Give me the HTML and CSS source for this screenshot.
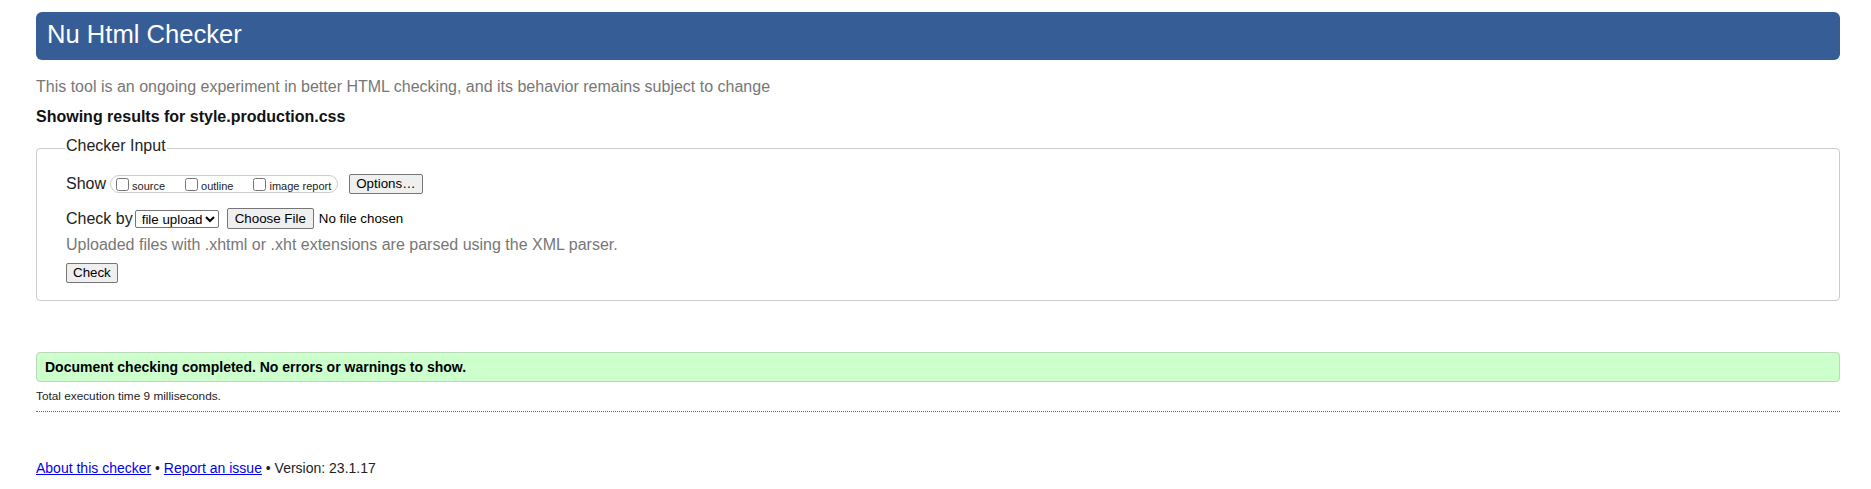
FILE: index.html
```html
<!DOCTYPE html>
<html lang="en">
<head>
<meta charset="utf-8">
<title>Nu Html Checker</title>
<link rel="stylesheet" href="styles.css">
</head>
<body>
<h1 class="title">Nu Html Checker</h1>
<p class="intro">This tool is an ongoing experiment in better HTML checking, and its behavior remains subject to change</p>
<p class="showing">Showing results for style.production.css</p>
<form class="checker-form">
  <fieldset class="checker-input">
    <legend class="checker-legend">Checker Input</legend>
    <div class="row row-show">
      <span class="row-label">Show</span>
      <span class="checkboxes">
        <label class="cb-label"><input type="checkbox" class="cb"><span class="cb-text">source</span></label>
        <label class="cb-label"><input type="checkbox" class="cb"><span class="cb-text">outline</span></label>
        <label class="cb-label cb-last"><input type="checkbox" class="cb"><span class="cb-text">image report</span></label>
      </span>
      <button type="button" class="btn btn-options">Options…</button>
    </div>
    <div class="row row-checkby">
      <span class="row-label">Check by</span>
      <select class="select-mode"><option>file upload</option></select>
      <input type="file" class="file-input">
    </div>
    <p class="hint">Uploaded files with .xhtml or .xht extensions are parsed using the XML parser.</p>
    <div class="row row-submit">
      <button type="button" class="btn btn-check">Check</button>
    </div>
  </fieldset>
</form>
<p class="success">Document checking completed. No errors or warnings to show.</p>
<p class="stats">Total execution time 9 milliseconds.</p>
<div class="divider"></div>
<p class="footer"><a href="#" class="link">About this checker</a> • <a href="#" class="link">Report an issue</a> • Version: 23.1.17</p>
</body>
</html>
```

FILE: styles.css
```css
html, body {
  background: #ffffff;
}
body {
  margin: 0;
  padding: 0 31px 20px 36px;
  font-family: "Liberation Sans", Arial, sans-serif;
  font-size: 16px;
  color: #222222;
}
.title {
  margin: 12px 0 0;
  padding: 0 11px 4px;
  background: #365d95;
  color: #ffffff;
  font-size: 25.6px;
  font-weight: normal;
  line-height: 44px;
  border-radius: 6px;
}
.intro {
  margin: 17px 0 0;
  line-height: 20px;
  color: #777777;
}
.showing {
  margin: 10px 0 0;
  line-height: 20px;
  font-weight: bold;
  color: #111111;
}
.checker-form {
  margin: 10px 0 0;
}
.checker-input {
  margin: 0;
  padding: 15px 12px 17px 29px;
  border: 1px solid #cccccc;
  border-radius: 4px;
  min-width: 0;
}
.checker-legend {
  padding: 0 1px 4px;
  margin-left: -1px;
  font-size: 16px;
  line-height: 18px;
  color: #222222;
}
.row {
  display: flex;
  align-items: center;
  line-height: 20px;
}
.row-show {
  height: 20px;
}
.row-checkby {
  margin-top: 14px;
  height: 21px;
}
.row-label {
  font-size: 16px;
}
.checkboxes {
  display: inline-flex;
  align-items: center;
  box-sizing: border-box;
  height: 18px;
  margin-left: 4px;
  padding: 0 6px 0 1px;
  border: 1px solid #cccccc;
  border-radius: 9px;
}
.cb-label {
  display: inline-flex;
  align-items: flex-end;
  font-size: 11px;
  margin-right: 16px;
}
.cb-text {
  line-height: 10px;
}
.cb-last {
  margin-right: 0;
}
.cb {
  width: 13px;
  height: 13px;
  margin: 0 3px 0 4px;
}
.btn {
  font-family: "Liberation Sans", Arial, sans-serif;
  font-size: 13.33px;
  height: 20px;
  box-sizing: border-box;
  padding: 0 6px;
  border: 1px solid #767676;
  border-radius: 2px;
  background: #efefef;
  color: #000000;
  line-height: 18px;
}
.btn-options {
  margin-left: 11px;
}
.select-mode {
  margin-left: 2px;
  height: 18px;
  width: 84px;
  box-sizing: border-box;
  font-family: "Liberation Sans", Arial, sans-serif;
  font-size: 13.33px;
  padding: 0 0 0 2px;
  border: 1px solid #767676;
  border-radius: 2px;
  background: #ffffff;
  color: #000000;
}
.file-input {
  margin-left: 8px;
  font-family: "Liberation Sans", Arial, sans-serif;
  font-size: 13.33px;
  color: #000000;
}
.file-input::file-selector-button {
  height: 21px;
  box-sizing: border-box;
  padding: 0 7px;
  margin-right: 5px;
  border: 1px solid #767676;
  border-radius: 2px;
  background: #efefef;
  color: #000000;
  font-family: "Liberation Sans", Arial, sans-serif;
  font-size: 13.33px;
}
.hint {
  margin: 6px 0 0;
  line-height: 20px;
  color: #777777;
}
.row-submit {
  margin-top: 8px;
}
.success {
  margin: 51px 0 0;
  padding: 0 8px;
  border: 1px solid #b9d9b9;
  border-radius: 4px;
  background: #ccffcc;
  font-size: 14px;
  font-weight: bold;
  line-height: 28px;
  color: #000000;
}
.stats {
  margin: 7px 0 0;
  font-size: 11.8px;
  line-height: 14px;
  color: #222222;
}
.divider {
  margin-top: 8px;
  border-top: 1px dotted #666666;
}
.footer {
  margin: 47px 0 0;
  font-size: 14px;
  line-height: 18px;
  color: #222222;
}
.link {
  color: #0000ee;
}
```
